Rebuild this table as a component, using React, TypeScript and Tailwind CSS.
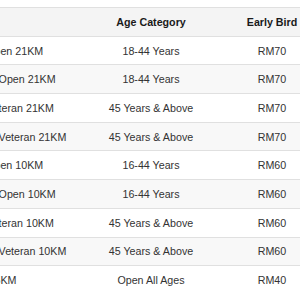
import React from 'react';

const rows = [
  { name: 'Male Open 21KM', age: '18-44 Years', price: 'RM70' },
  { name: 'Female Open 21KM', age: '18-44 Years', price: 'RM70' },
  { name: 'Male Veteran 21KM', age: '45 Years & Above', price: 'RM70' },
  { name: 'Female Veteran 21KM', age: '45 Years & Above', price: 'RM70' },
  { name: 'Male Open 10KM', age: '16-44 Years', price: 'RM60' },
  { name: 'Female Open 10KM', age: '16-44 Years', price: 'RM60' },
  { name: 'Male Veteran 10KM', age: '45 Years & Above', price: 'RM60' },
  { name: 'Female Veteran 10KM', age: '45 Years & Above', price: 'RM60' },
  { name: 'Family 5KM', age: 'Open All Ages', price: 'RM40' },
];

export default function App() {
  return (
    <div className="w-[300px] h-[300px] overflow-hidden bg-white pt-[7px] text-[10.7px] font-['Liberation_Sans',Arial,sans-serif]">
      <div className="ml-[-48px] w-[348px]">
        <div className="grid grid-cols-[106px_186px_56px] h-[28.7px] items-center border-t border-[#e0e0e0] bg-[#f4f4f4] font-bold text-[#1a1a1a]">
          <div className="pl-[8px] whitespace-nowrap">Event</div>
          <div className="text-center">Age Category</div>
          <div className="text-center whitespace-nowrap">Early Bird</div>
        </div>
        {rows.map((r, i) => (
          <div
            key={r.name}
            className={`grid grid-cols-[106px_186px_56px] h-[28.7px] items-center border-t border-[#e0e0e0] text-[#333] ${i % 2 === 1 ? 'bg-[#f8f8f8]' : 'bg-white'}`}
          >
            <div className="pl-[8px] whitespace-nowrap">{r.name}</div>
            <div className="text-center whitespace-nowrap">{r.age}</div>
            <div className="text-center">{r.price}</div>
          </div>
        ))}
      </div>
    </div>
  );
}
